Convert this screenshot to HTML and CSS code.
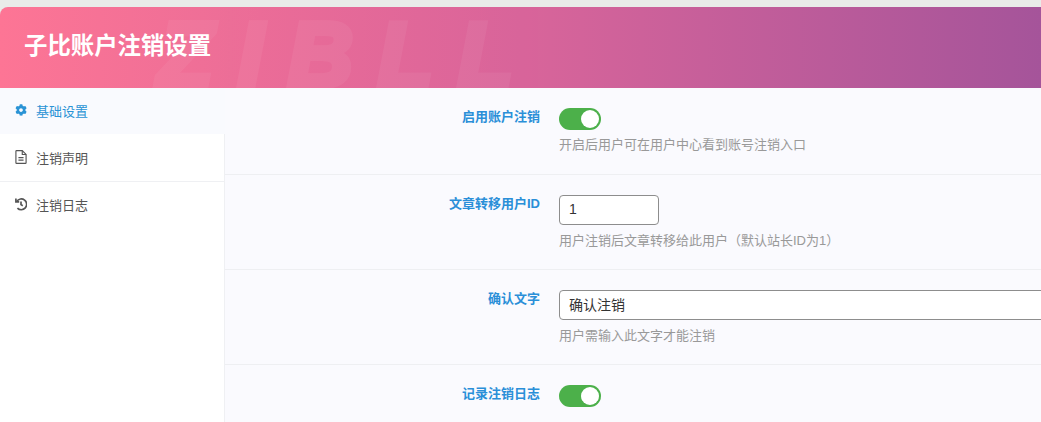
FILE: index.html
```html
<!DOCTYPE html>
<html lang="zh-CN">
<head>
<meta charset="utf-8">
<title>子比账户注销设置</title>
<link rel="stylesheet" href="styles.css">
</head>
<body>
<div class="page">
  <header class="banner">
    <span class="watermark">ZIBLL</span>
    <h1 class="title">子比账户注销设置</h1>
  </header>
  <div class="main">
    <nav class="side">
      <a class="tab active">
        <svg class="ico" viewBox="0 0 512 512"><path fill="currentColor" fill-rule="evenodd" d="M487 316l-42-25c4-23 4-47 0-70l42-25c5-3 7-9 5-14-11-35-30-67-54-93-4-4-10-5-14-2l-42 24c-18-15-38-27-60-35V28c0-6-4-10-9-11-36-8-73-8-108 0-5 1-9 5-9 11v48c-22 8-42 20-60 35L94 87c-5-3-11-2-14 2-24 26-43 58-54 93-2 5 0 11 5 14l42 25c-4 23-4 47 0 70l-42 25c-5 3-7 9-5 14 11 35 30 67 54 93 4 4 10 5 14 2l42-24c18 15 38 27 60 35v48c0 6 4 10 9 11 36 8 73 8 108 0 5-1 9-5 9-11v-48c22-8 42-20 60-35l42 24c5 3 11 2 14-2 24-26 43-58 54-93 1-5-1-11-6-14zM256 336c-44 0-80-36-80-80s36-80 80-80 80 36 80 80-36 80-80 80z"/></svg>
        <span>基础设置</span>
      </a>
      <a class="tab">
        <svg class="ico" viewBox="3 1 18 22" fill="none" stroke="currentColor" stroke-width="1.8"><path d="M14 2H5a1 1 0 0 0-1 1v18a1 1 0 0 0 1 1h14a1 1 0 0 0 1-1V8z"/><path d="M14 2v6h6M8 13h8M8 17h8"/></svg>
        <span>注销声明</span>
      </a>
      <a class="tab">
        <svg class="ico" viewBox="2 2 20 20" fill="none" stroke="currentColor" stroke-width="2.8"><path d="M5 7.5A9 9 0 1 1 6 18.8"/><path d="M3.5 3v5.5H9"/><path d="M12 8v5l3 2"/></svg>
        <span>注销日志</span>
      </a>
    </nav>
    <section class="form">
      <div class="row">
        <label class="label">启用账户注销</label>
        <div class="field">
          <span class="switch"><span class="knob"></span></span>
          <p class="hint hint-switch">开启后用户可在用户中心看到账号注销入口</p>
        </div>
      </div>
      <div class="row">
        <label class="label">文章转移用户ID</label>
        <div class="field">
          <input class="input input-short" type="text" value="1">
          <p class="hint">用户注销后文章转移给此用户（默认站长ID为1）</p>
        </div>
      </div>
      <div class="row">
        <label class="label">确认文字</label>
        <div class="field">
          <input class="input input-wide" type="text" value="确认注销">
          <p class="hint">用户需输入此文字才能注销</p>
        </div>
      </div>
      <div class="row">
        <label class="label">记录注销日志</label>
        <div class="field">
          <span class="switch"><span class="knob"></span></span>
        </div>
      </div>
    </section>
  </div>
</div>
</body>
</html>
```
FILE: styles.css
```css
* { box-sizing: border-box; }
html, body { margin: 0; height: 100%; overflow: hidden; }
body {
  background: #fafafe;
  font-family: "Liberation Sans", "Noto Sans CJK SC", sans-serif;
  color: #444;
}
.page { padding-top: 7px; background: #e9ebe9; height: 422px; overflow: hidden; }
.banner {
  position: relative;
  height: 81px;
  background: linear-gradient(90deg, #fd7595 0%, #d9659a 50%, #a5549a 100%);
  border-top-left-radius: 8px;
  overflow: hidden;
  padding: 23px 0 0 24px;
}
.watermark {
  position: absolute;
  left: 158px;
  top: 15px;
  font-size: 90px;
  line-height: 66px;
  font-weight: 700;
  font-style: italic;
  letter-spacing: 25px;
  color: #fff;
  -webkit-text-stroke: 6px #fff;
  opacity: 0.05;
}
.title {
  position: relative;
  margin: 0;
  font-size: 23.4px;
  line-height: 32px;
  font-weight: 700;
  color: #fff;
}
.main { display: flex; height: 334px; background: #fafafe; }
.side {
  width: 225px;
  flex: none;
  display: flex;
  flex-direction: column;
  background: #fff;
  border-right: 1px solid #eff0f3;
}
.tab {
  display: flex;
  align-items: center;
  height: 48px;
  padding: 0 0 1px 15px;
  gap: 9px;
  font-size: 13px;
  color: #555;
  border-bottom: 1px solid #eff0f3;
}
.tab:last-child { height: 47px; padding-bottom: 3px; border-bottom: 0; }
.tab.active {
  height: 46px;
  margin-right: -1px;
  padding-bottom: 2px;
  color: #2a93d5;
  background: #f9fafe;
  border-bottom: 0;
}
.ico { width: 12px; height: 14px; flex: none; }
.form { flex: 1; min-width: 0; }
.row {
  display: flex;
  height: 95px;
  padding-top: 20px;
  border-bottom: 1px solid #eeeff2;
}
.row:first-child { height: 87px; }
.label {
  width: 315px;
  flex: none;
  text-align: right;
  font-size: 13px;
  line-height: 18px;
  font-weight: 700;
  color: #2a8fd8;
}
.field { margin-left: 19px; flex: 1; min-width: 0; }
.switch {
  display: block;
  width: 42px;
  height: 22px;
  border-radius: 11px;
  background: #4cb04a;
  position: relative;
}
.knob {
  position: absolute;
  right: 2px;
  top: 2px;
  width: 18px;
  height: 18px;
  border-radius: 50%;
  background: #fff;
}
.input {
  display: block;
  height: 30px;
  border: 1px solid #8d8d8d;
  border-radius: 4px;
  background: #fff;
  padding: 0 9px 2px;
  font: 14px "Liberation Sans", "Noto Sans CJK SC", sans-serif;
  color: #333;
  outline: none;
}
.input-short { width: 100px; }
.input-wide { width: calc(100% + 6px); }
.hint {
  margin: 7px 0 0;
  font-size: 13px;
  line-height: 18px;
  color: #999;
}
.hint-switch { margin-top: 6px; }
```
